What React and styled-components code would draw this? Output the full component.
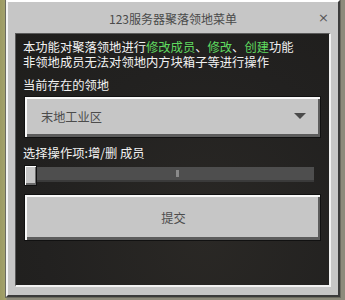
import React, {useState} from "react";
import styled, {createGlobalStyle} from 'styled-components';

const GlobalStyle = createGlobalStyle`
    html, body {
        margin: 0;
        padding: 0;
        width: 345px;
        height: 300px;
        overflow: hidden;
        background: #8e8c74;
        font-family: "Noto Sans CJK SC", "Noto Sans", sans-serif;
    }
`;

const StyleScreen = styled.div`
    width: 345px;
    height: 300px;
    padding-left: 6px;
    box-sizing: border-box;
    background: linear-gradient(90deg, #9c9a62 0px, #a4a36e 6px, #8d8b7c 7px);
`;

const StylePanel = styled.div`
    width: 334px;
    height: 297px;
    box-sizing: border-box;
    background-color: #c6c6c6;
    border-top: 2px solid #ffffff;
    border-left: 2px solid #f4f4f4;
    border-right: 2px solid #3b3b3b;
    border-bottom: 2px solid #3b3b3b;
    outline: 1px solid #6b6b60;
    display: flex;
    flex-direction: column;
    padding: 0 7px 8px 7px;
`;

const StyleHeader = styled.div`
    position: relative;
    height: 31px;
    display: flex;
    align-items: center;
    justify-content: center;
    flex-shrink: 0;
`;

const StyleTitle = styled.div`
    font-size: 12px;
    color: #4a4a4a;
    padding-top: 2px;
`;

const StyleClose = styled.div`
    position: absolute;
    right: 2px;
    top: 9px;
    font-family: "DejaVu Sans", sans-serif;
    font-size: 13px;
    line-height: 14px;
    color: #575757;
`;

const StyleBody = styled.div`
    flex: 1;
    background: radial-gradient(ellipse at 60% 80%, #2a2825 0%, #222120 60%, #1f1e1c 100%);
    border-top: 1px solid #5a5a5a;
    border-left: 1px solid #5a5a5a;
    border-right: 2px solid #f2f2f2;
    border-bottom: 2px solid #f2f2f2;
    padding: 6px 8px 0 7px;
    display: flex;
    flex-direction: column;
`;

const StyleText = styled.div`
    font-size: 12.3px;
    line-height: 15px;
    color: #f2f2f2;
    white-space: nowrap;
    margin-top: ${props => props.gap || 0}px;
`;

const StyleGreen = styled.span`
    color: #5fd95f;
`;

const StyleBlockButton = styled.div`
    margin-top: ${props => props.gap || 0}px;
    margin-left: 1px;
    height: ${props => props.h}px;
    box-sizing: border-box;
    background-color: #c6c6c6;
    border: 1px solid #111;
    box-shadow: inset 2px 2px 0 #f8f8f8, inset -2px -3px 0 #5c5c5c;
    display: flex;
    align-items: center;
    justify-content: ${props => props.center ? 'center' : 'space-between'};
    padding: 0 14px 0 16px;
    font-size: 12.2px;
    color: #4c4c4c;
`;

const StyleArrow = styled.div`
    width: 0;
    height: 0;
    border-left: 6px solid transparent;
    border-right: 6px solid transparent;
    border-top: 6px solid #4a4a4a;
    margin-top: -2px;
`;

const StyleSliderRow = styled.div`
    margin-top: 4px;
    margin-left: 1px;
    height: 21px;
    display: flex;
    align-items: center;
`;

const StyleHandle = styled.div`
    width: 13px;
    height: 21px;
    box-sizing: border-box;
    background-color: #c6c6c6;
    border: 1px solid #111;
    box-shadow: inset 1px 1px 0 #ffffff, inset -1px -2px 0 #6a6a6a;
    flex-shrink: 0;
`;

const StyleTrack = styled.div`
    width: 277px;
    height: 13px;
    margin-top: -2px;
    background-color: #4e4e4e;
    border-bottom: 2px solid #3a3a3a;
    display: flex;
    align-items: center;
    justify-content: center;
`;

const StyleTick = styled.div`
    width: 3px;
    height: 7px;
    background-color: #8a8a8a;
    margin-left: 4px;
`;

const App = () => {
    const [area] = useState('末地工业区');

    return (
        <StyleScreen>
            <GlobalStyle/>
            <StylePanel>
                <StyleHeader>
                    <StyleTitle>123服务器聚落领地菜单</StyleTitle>
                    <StyleClose>×</StyleClose>
                </StyleHeader>
                <StyleBody>
                    <StyleText>
                        本功能对聚落领地进行<StyleGreen>修改成员</StyleGreen>、<StyleGreen>修改</StyleGreen>、<StyleGreen>创建</StyleGreen>功能
                    </StyleText>
                    <StyleText>非领地成员无法对领地内方块箱子等进行操作</StyleText>
                    <StyleText gap={8}>当前存在的领地</StyleText>
                    <StyleBlockButton gap={3} h={42}>
                        <span>{area}</span>
                        <StyleArrow/>
                    </StyleBlockButton>
                    <StyleText gap={8}>选择操作项:增/删 成员</StyleText>
                    <StyleSliderRow>
                        <StyleHandle/>
                        <StyleTrack>
                            <StyleTick/>
                        </StyleTrack>
                    </StyleSliderRow>
                    <StyleBlockButton gap={8} h={47} center>提交</StyleBlockButton>
                </StyleBody>
            </StylePanel>
        </StyleScreen>
    )
};

export default App;
